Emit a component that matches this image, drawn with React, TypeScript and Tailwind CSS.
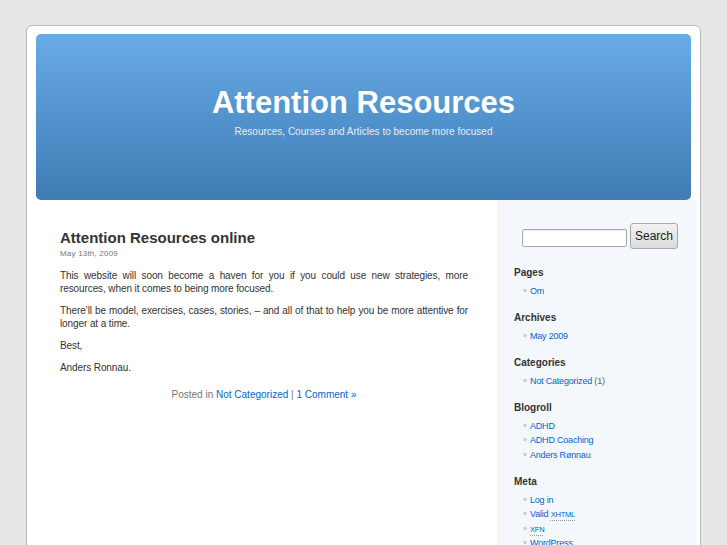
import type { ReactNode } from 'react';

const font = "font-['Liberation_Sans',Arial,Helvetica,sans-serif]";

function Bullet() {
  return <span className="inline-block w-[7px] text-[7px] text-[#a0a0a0] align-[1px]">»</span>;
}

function Section({ title, children, first }: { title: string; children: ReactNode; first?: boolean }) {
  return (
    <div className={first ? 'mt-[19px]' : 'mt-[14.75px]'}>
      <h2 className="text-[10px] leading-none font-bold text-[#333]">{title}</h2>
      <ul className="mt-[5.75px] pl-[9px]">{children}</ul>
    </div>
  );
}

function Item({ children, extra }: { children: ReactNode; extra?: string }) {
  return (
    <li className="h-[14.5px] text-[9px] leading-[14.5px] tracking-[-0.2px] whitespace-nowrap">
      <Bullet />
      <a className="text-[#0066cc]">{children}</a>
      {extra && <span className="text-[#666]"> {extra}</span>}
    </li>
  );
}

function Abbr({ children }: { children: ReactNode }) {
  return (
    <span className="text-[7.5px] underline decoration-dotted decoration-[#999] underline-offset-[3px]">
      {children}
    </span>
  );
}

export default function App() {
  return (
    <div className={`min-h-[545px] bg-[#e7e7e7] pt-[25px] pl-[26px] ${font}`}>
      <div className="w-[675px] h-[540px] border border-[#b9b9b9] rounded-t-[6px] bg-white overflow-hidden">
        <div className="px-[9px] pt-[8px]">
          <header className="h-[166px] rounded-[5px] bg-gradient-to-b from-[#68abe7] to-[#3f7cb4] pt-[53px] text-center">
            <h1 className="text-[31px] leading-none font-bold text-white">Attention Resources</h1>
            <p className="mt-[9px] text-[10px] leading-none text-[#e2edf8]">
              Resources, Courses and Articles to become more focused
            </p>
          </header>
        </div>

        <div className="flex">
          <main className="w-[470px] pl-[33px] pr-[29px] pt-[30px] text-[#333]">
            <h2 className="text-[15px] leading-none font-bold text-[#333]">Attention Resources online</h2>
            <p className="mt-[5px] text-[8px] leading-none tracking-[0.2px] text-[#777]">May 13th, 2009</p>
            <div className="mt-[11px] text-[10px] leading-[13px] tracking-[-0.1px] text-justify space-y-[9px]">
              <p>
                This website will soon become a haven for you if you could use new strategies, more resources,
                when it comes to being more focused.
              </p>
              <p>
                There’ll be model, exercises, cases, stories, – and all of that to help you be more attentive for
                longer at a time.
              </p>
              <p>Best,</p>
              <p>Anders Ronnau.</p>
            </div>
            <p className="mt-[14px] text-[10px] leading-[13px] text-center text-[#777]">
              Posted in <a className="text-[#0066cc]">Not Categorized</a> |{' '}
              <a className="text-[#0066cc]">1 Comment »</a>
            </p>
          </main>

          <aside className="w-[200px] min-h-[340px] bg-[#f4f8fc] pt-[23px] pl-[17px]">
            <form className="flex items-start pl-[8px] gap-[3px]">
              <input
                type="text"
                className="mt-[6px] w-[105px] h-[18px] bg-white border border-[#a9a9a9] rounded-[2px] shadow-[inset_0_1px_1px_rgba(0,0,0,0.08)]"
              />
              <button
                type="button"
                className="w-[48px] h-[26px] rounded-[3px] border border-[#a8a8a8] bg-gradient-to-b from-[#f2f2f2] to-[#dcdcdc] text-[12px] text-[#222]"
              >
                Search
              </button>
            </form>

            <Section title="Pages" first>
              <Item>Om</Item>
            </Section>
            <Section title="Archives">
              <Item>May 2009</Item>
            </Section>
            <Section title="Categories">
              <Item extra="(1)">Not Categorized</Item>
            </Section>
            <Section title="Blogroll">
              <Item>ADHD</Item>
              <Item>ADHD Coaching</Item>
              <Item>Anders Rønnau</Item>
            </Section>
            <Section title="Meta">
              <Item>Log in</Item>
              <Item>
                Valid <Abbr>XHTML</Abbr>
              </Item>
              <Item>
                <Abbr>XFN</Abbr>
              </Item>
              <Item>WordPress</Item>
            </Section>
          </aside>
        </div>
      </div>
    </div>
  );
}
